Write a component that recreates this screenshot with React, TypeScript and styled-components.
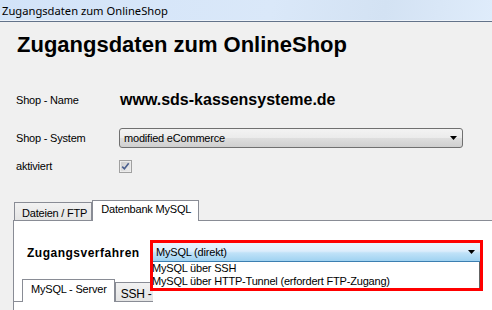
import React from "react";
import styled, { createGlobalStyle } from "styled-components";

const GlobalStyle = createGlobalStyle`
  html, body {
    margin: 0;
    padding: 0;
  }
  body {
    font-family: "Liberation Sans", Arial, sans-serif;
    font-size: 11px;
    letter-spacing: -0.2px;
    color: #000;
  }
`;

export default function App() {
  return (
    <>
      <GlobalStyle />
      <Window>
        <TitleBar>Zugangsdaten zum OnlineShop</TitleBar>
        <Heading>Zugangsdaten zum OnlineShop</Heading>

        <FormGrid>
          <FieldRow $top={32}>
            <Label>Shop - Name</Label>
            <ShopName>www.sds-kassensysteme.de</ShopName>
          </FieldRow>
          <FieldRow $top={18}>
            <Label>Shop - System</Label>
            <Select>
              modified eCommerce
              <DropArrow />
            </Select>
          </FieldRow>
          <FieldRow $top={8}>
            <Label>aktiviert</Label>
            <CheckBox />
          </FieldRow>
        </FormGrid>

        <TabSection>
          <TabStrip>
            <Tab>Dateien / FTP</Tab>
            <Tab $active>Datenbank MySQL</Tab>
          </TabStrip>
          <TabPanel>
            <AccessRow>
              <BoldLabel>Zugangsverfahren</BoldLabel>
              <ComboWrap>
                <Combo>
                  MySQL (direkt)
                  <DropArrow />
                </Combo>
                <DropList>
                  <DropItem>MySQL über SSH</DropItem>
                  <DropItem>MySQL über HTTP-Tunnel (erfordert FTP-Zugang)</DropItem>
                </DropList>
                <Highlight />
              </ComboWrap>
            </AccessRow>

            <SubStrip>
              <SubSpacer />
              <SubTab $active>MySQL - Server</SubTab>
              <SubTab $width={38}>SSH - S</SubTab>
            </SubStrip>
          </TabPanel>
        </TabSection>
      </Window>
    </>
  );
}

function DropArrow() {
  return (
    <ArrowIcon width="7" height="4" viewBox="0 0 7 4">
      <path d="M0 0h7L3.5 4z" fill="#000" />
    </ArrowIcon>
  );
}

function CheckBox() {
  return (
    <svg width="13" height="13" viewBox="0 0 13 13">
      <defs>
        <linearGradient id="cbg" x1="0" y1="0" x2="1" y2="1">
          <stop offset="0" stopColor="#c9c9c9" />
          <stop offset="1" stopColor="#f2f2f2" />
        </linearGradient>
      </defs>
      <rect x="0.5" y="0.5" width="12" height="12" fill="#f4f4f4" stroke="#a0a0a0" />
      <rect x="2" y="2" width="9" height="9" fill="url(#cbg)" stroke="#d8d8d8" strokeWidth="0.6" />
      <path d="M3.2 6.6l2.2 2.2 4.3-5.6" fill="none" stroke="#4a5f8e" strokeWidth="1.6" />
    </svg>
  );
}

const Window = styled.div`
  width: 492px;
  height: 310px;
  overflow: hidden;
  background: #f0f0f0;
  display: flex;
  flex-direction: column;
`;

const TitleBar = styled.div`
  flex: none;
  height: 21px;
  display: flex;
  align-items: center;
  padding-left: 2px;
  letter-spacing: 0;
  font-family: "Noto Sans", "Open Sans", sans-serif;
  font-size: 11.2px;
  color: #000;
  background: linear-gradient(100deg, #d2e3f8 0%, #dae8f9 55%, #d3e2f3 78%, #dfecfb 100%);
  border-bottom: 1px solid #63738a;
  box-shadow: inset 0 -1px 0 #edf3fa;
`;

const Heading = styled.h1`
  margin: 10px 0 0 17px;
  font-family: "Liberation Sans", Arial, sans-serif;
  font-size: 22px;
  line-height: 26px;
  font-weight: bold;
  letter-spacing: 0;
`;

const FormGrid = styled.div`
  display: flex;
  flex-direction: column;
  padding-left: 16px;
`;

const FieldRow = styled.div<{ $top: number }>`
  display: grid;
  grid-template-columns: 103px auto;
  align-items: center;
  height: 20px;
  margin-top: ${(p) => p.$top}px;
`;

const Label = styled.div``;

const ShopName = styled.div`
  font-size: 16px;
  font-weight: bold;
  letter-spacing: 0;
  padding-left: 1px;
`;

const Select = styled.div`
  position: relative;
  width: 344px;
  height: 20px;
  box-sizing: border-box;
  display: flex;
  align-items: center;
  padding-left: 4px;
  border: 1px solid #707070;
  border-radius: 3px;
  background: linear-gradient(#f3f3f3, #ebebeb 50%, #dedede 51%, #cfcfcf);
`;

const ArrowIcon = styled.svg`
  position: absolute;
  right: 5px;
  top: 50%;
  margin-top: -2px;
`;

const TabSection = styled.div`
  flex: 1;
  display: flex;
  flex-direction: column;
  margin: 24px 0 0 13px;
`;

const TabStrip = styled.div`
  display: flex;
  align-items: flex-end;
  height: 21px;
  padding-left: 1px;
  margin-bottom: -1px;
  position: relative;
  z-index: 1;
`;

const Tab = styled.div<{ $active?: boolean }>`
  box-sizing: border-box;
  height: ${(p) => (p.$active ? 21 : 18)}px;
  margin-bottom: ${(p) => (p.$active ? 0 : 1)}px;
  padding: ${(p) => (p.$active ? "2px 7px 0 8px" : "2px 4px 0 7px")};
  display: flex;
  align-items: ${(p) => (p.$active ? "flex-start" : "center")};
  border: 1px solid #898c95;
  border-bottom: none;
  background: ${(p) => (p.$active ? "#ffffff" : "linear-gradient(#f2f2f2, #e4e4e4)")};
  white-space: nowrap;
  overflow: hidden;
`;

const TabPanel = styled.div`
  flex: 1;
  background: #ffffff;
  border-top: 1px solid #898c95;
  border-left: 1px solid #898c95;
  display: flex;
  flex-direction: column;
`;

const AccessRow = styled.div`
  display: flex;
  align-items: center;
  margin-top: 22px;
  padding-left: 13px;
`;

const BoldLabel = styled.div`
  width: 124px;
  font-size: 12px;
  font-weight: bold;
  letter-spacing: 0.5px;
`;

const ComboWrap = styled.div`
  position: relative;
  width: 329px;
  height: 19px;
  z-index: 2;
`;

const Combo = styled.div`
  position: relative;
  box-sizing: border-box;
  height: 19px;
  display: flex;
  align-items: center;
  padding-left: 5px;
  border-bottom: 1px solid #3c7fb1;
  background: linear-gradient(#eaf4fd, #dcedfc 45%, #c0e2f8 55%, #9fd2f1);
`;

const DropList = styled.div`
  position: absolute;
  left: 0;
  right: 0;
  top: 19px;
  height: 27px;
  box-sizing: border-box;
  background: #ffffff;
  border: 1px solid #646464;
  border-top: none;
`;

const DropItem = styled.div`
  height: 13px;
  line-height: 13px;
  white-space: nowrap;
`;

const Highlight = styled.div`
  position: absolute;
  left: -1px;
  top: -3px;
  width: 333px;
  height: 51px;
  box-sizing: border-box;
  border: 3px solid #ff0000;
  pointer-events: none;
`;

const SubStrip = styled.div`
  display: flex;
  align-items: flex-end;
  height: 23px;
  margin-top: 17px;
`;

const SubSpacer = styled.div`
  width: 8px;
  border-bottom: 1px solid #898c95;
`;

const SubTab = styled.div<{ $active?: boolean; $width?: number }>`
  box-sizing: border-box;
  height: ${(p) => (p.$active ? 23 : 20)}px;
  ${(p) => (p.$width ? `width: ${p.$width}px;` : "")}
  padding: ${(p) => (p.$active ? "3px 7px 0 8px" : "3px 0 0 5px")};
  display: flex;
  align-items: ${(p) => (p.$active ? "flex-start" : "center")};
  border: 1px solid #898c95;
  border-bottom: ${(p) => (p.$active ? "none" : "1px solid #898c95")};
  border-right: ${(p) => (p.$width ? "none" : "1px solid #898c95")};
  background: ${(p) => (p.$active ? "#ffffff" : "linear-gradient(#f2f2f2, #e4e4e4)")};
  white-space: nowrap;
  overflow: hidden;
  font-size: ${(p) => (p.$active ? 11 : 12)}px;
`;
